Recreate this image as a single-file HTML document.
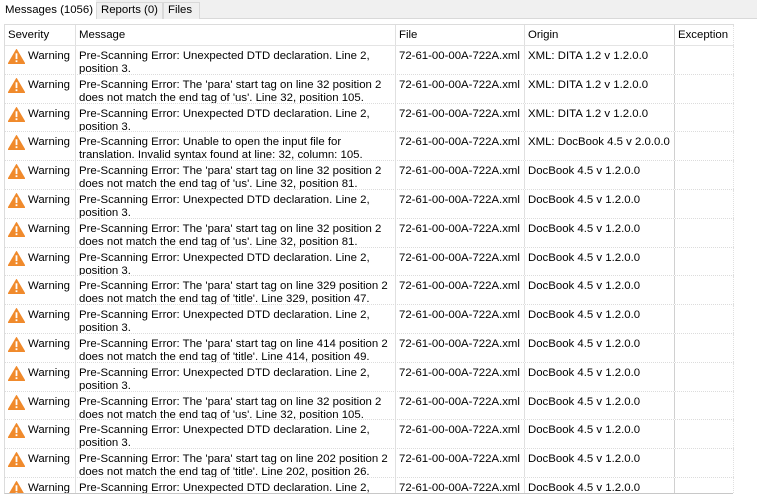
<!DOCTYPE html>
<html><head><style>
*{margin:0;padding:0;box-sizing:border-box}
body{width:757px;height:498px;background:#fff;font-family:"Liberation Sans",sans-serif;font-size:11.4px;color:#000;position:relative;overflow:hidden}
.tabbar{position:absolute;left:0;top:0;width:757px;height:19px;background:#f0f0f0;border-bottom:1px solid #d9d9d9}
.tab{position:absolute;top:2px;height:17px;line-height:15px;padding:0 0 0 4px;background:#f0f0f0;border:1px solid #d9d9d9;border-bottom:none;white-space:nowrap;overflow:hidden}
.tab.act{top:0;height:20px;background:#fff;border-color:#fff;line-height:18px}
.grid{position:absolute;left:4px;top:24px;width:729px;height:470px;border-left:1px solid #dcdcdc;border-bottom:1px solid #c8c8c8}
.hdr{position:absolute;left:0;top:0;width:729px;height:22px;border-top:1px solid #dcdcdc;border-bottom:1px solid #e4e4e4}
.c{position:absolute;top:0;height:100%;padding:4px 0 0 3px;line-height:13px;border-right:1px solid #e0e0e0;overflow:hidden;white-space:nowrap}
.hdr .c{padding-top:4px}
.c1{left:0;width:71px}.c2{left:71px;width:320px}.c3{left:391px;width:129px}.c4{left:520px;width:150px;border-right:1px solid #d0d0d0}.c5{left:670px;width:59px;border-right:1px dotted #e0e0e0}
.row{position:absolute;left:0;width:729px;height:28.8px;border-bottom:1px dotted #dcdcdc}
.row .c1{padding-left:3px}
.tri{display:inline-block;width:17px;height:15px;vertical-align:top;margin-right:3px;margin-top:-1px}
</style></head><body>
<div class="tabbar">
<div class="tab act" style="left:0;width:96px">Messages (1056)</div>
<div class="tab" style="left:96px;width:67px">Reports (0)</div>
<div class="tab" style="left:163px;width:37px">Files</div>
</div>
<div class="grid">
<div class="hdr"><div class="c c1">Severity</div><div class="c c2">Message</div><div class="c c3">File</div><div class="c c4">Origin</div><div class="c c5">Exception</div></div>
<svg width="0" height="0" style="position:absolute"><defs><symbol id="w" viewBox="0 0 17 15"><path d="M8.5 0.5 L16.7 14.5 L0.3 14.5 Z" fill="#f08a2c" stroke="#f08a2c" stroke-linejoin="round"/><rect x="7.6" y="4.3" width="1.8" height="5.8" fill="#fff"/><rect x="7.6" y="11.3" width="1.8" height="1.8" fill="#fff"/></symbol></defs></svg>

<div class="row" style="top:22px"><div class="c c1"><svg class="tri"><use href="#w"/></svg>Warning</div><div class="c c2">Pre-Scanning Error: Unexpected DTD declaration. Line 2,<br>position 3.</div><div class="c c3">72-61-00-00A-722A.xml</div><div class="c c4">XML: DITA 1.2 v 1.2.0.0</div><div class="c c5"></div></div>
<div class="row" style="top:50.8px"><div class="c c1"><svg class="tri"><use href="#w"/></svg>Warning</div><div class="c c2">Pre-Scanning Error: The 'para' start tag on line 32 position 2<br>does not match the end tag of 'us'. Line 32, position 105.</div><div class="c c3">72-61-00-00A-722A.xml</div><div class="c c4">XML: DITA 1.2 v 1.2.0.0</div><div class="c c5"></div></div>
<div class="row" style="top:79.6px"><div class="c c1"><svg class="tri"><use href="#w"/></svg>Warning</div><div class="c c2">Pre-Scanning Error: Unexpected DTD declaration. Line 2,<br>position 3.</div><div class="c c3">72-61-00-00A-722A.xml</div><div class="c c4">XML: DITA 1.2 v 1.2.0.0</div><div class="c c5"></div></div>
<div class="row" style="top:108.4px"><div class="c c1"><svg class="tri"><use href="#w"/></svg>Warning</div><div class="c c2">Pre-Scanning Error: Unable to open the input file for<br>translation. Invalid syntax found at line: 32, column: 105.</div><div class="c c3">72-61-00-00A-722A.xml</div><div class="c c4">XML: DocBook 4.5 v 2.0.0.0</div><div class="c c5"></div></div>
<div class="row" style="top:137.2px"><div class="c c1"><svg class="tri"><use href="#w"/></svg>Warning</div><div class="c c2">Pre-Scanning Error: The 'para' start tag on line 32 position 2<br>does not match the end tag of 'us'. Line 32, position 81.</div><div class="c c3">72-61-00-00A-722A.xml</div><div class="c c4">DocBook 4.5 v 1.2.0.0</div><div class="c c5"></div></div>
<div class="row" style="top:166px"><div class="c c1"><svg class="tri"><use href="#w"/></svg>Warning</div><div class="c c2">Pre-Scanning Error: Unexpected DTD declaration. Line 2,<br>position 3.</div><div class="c c3">72-61-00-00A-722A.xml</div><div class="c c4">DocBook 4.5 v 1.2.0.0</div><div class="c c5"></div></div>
<div class="row" style="top:194.8px"><div class="c c1"><svg class="tri"><use href="#w"/></svg>Warning</div><div class="c c2">Pre-Scanning Error: The 'para' start tag on line 32 position 2<br>does not match the end tag of 'us'. Line 32, position 81.</div><div class="c c3">72-61-00-00A-722A.xml</div><div class="c c4">DocBook 4.5 v 1.2.0.0</div><div class="c c5"></div></div>
<div class="row" style="top:223.6px"><div class="c c1"><svg class="tri"><use href="#w"/></svg>Warning</div><div class="c c2">Pre-Scanning Error: Unexpected DTD declaration. Line 2,<br>position 3.</div><div class="c c3">72-61-00-00A-722A.xml</div><div class="c c4">DocBook 4.5 v 1.2.0.0</div><div class="c c5"></div></div>
<div class="row" style="top:252.4px"><div class="c c1"><svg class="tri"><use href="#w"/></svg>Warning</div><div class="c c2">Pre-Scanning Error: The 'para' start tag on line 329 position 2<br>does not match the end tag of 'title'. Line 329, position 47.</div><div class="c c3">72-61-00-00A-722A.xml</div><div class="c c4">DocBook 4.5 v 1.2.0.0</div><div class="c c5"></div></div>
<div class="row" style="top:281.2px"><div class="c c1"><svg class="tri"><use href="#w"/></svg>Warning</div><div class="c c2">Pre-Scanning Error: Unexpected DTD declaration. Line 2,<br>position 3.</div><div class="c c3">72-61-00-00A-722A.xml</div><div class="c c4">DocBook 4.5 v 1.2.0.0</div><div class="c c5"></div></div>
<div class="row" style="top:310px"><div class="c c1"><svg class="tri"><use href="#w"/></svg>Warning</div><div class="c c2">Pre-Scanning Error: The 'para' start tag on line 414 position 2<br>does not match the end tag of 'title'. Line 414, position 49.</div><div class="c c3">72-61-00-00A-722A.xml</div><div class="c c4">DocBook 4.5 v 1.2.0.0</div><div class="c c5"></div></div>
<div class="row" style="top:338.8px"><div class="c c1"><svg class="tri"><use href="#w"/></svg>Warning</div><div class="c c2">Pre-Scanning Error: Unexpected DTD declaration. Line 2,<br>position 3.</div><div class="c c3">72-61-00-00A-722A.xml</div><div class="c c4">DocBook 4.5 v 1.2.0.0</div><div class="c c5"></div></div>
<div class="row" style="top:367.6px"><div class="c c1"><svg class="tri"><use href="#w"/></svg>Warning</div><div class="c c2">Pre-Scanning Error: The 'para' start tag on line 32 position 2<br>does not match the end tag of 'us'. Line 32, position 105.</div><div class="c c3">72-61-00-00A-722A.xml</div><div class="c c4">DocBook 4.5 v 1.2.0.0</div><div class="c c5"></div></div>
<div class="row" style="top:396.4px"><div class="c c1"><svg class="tri"><use href="#w"/></svg>Warning</div><div class="c c2">Pre-Scanning Error: Unexpected DTD declaration. Line 2,<br>position 3.</div><div class="c c3">72-61-00-00A-722A.xml</div><div class="c c4">DocBook 4.5 v 1.2.0.0</div><div class="c c5"></div></div>
<div class="row" style="top:425.2px"><div class="c c1"><svg class="tri"><use href="#w"/></svg>Warning</div><div class="c c2">Pre-Scanning Error: The 'para' start tag on line 202 position 2<br>does not match the end tag of 'title'. Line 202, position 26.</div><div class="c c3">72-61-00-00A-722A.xml</div><div class="c c4">DocBook 4.5 v 1.2.0.0</div><div class="c c5"></div></div>
<div class="row" style="top:454px;height:15px;border-bottom:none"><div class="c c1"><svg class="tri"><use href="#w"/></svg>Warning</div><div class="c c2">Pre-Scanning Error: Unexpected DTD declaration. Line 2,<br>position 3.</div><div class="c c3">72-61-00-00A-722A.xml</div><div class="c c4">DocBook 4.5 v 1.2.0.0</div><div class="c c5"></div></div>
</div>
</body></html>
